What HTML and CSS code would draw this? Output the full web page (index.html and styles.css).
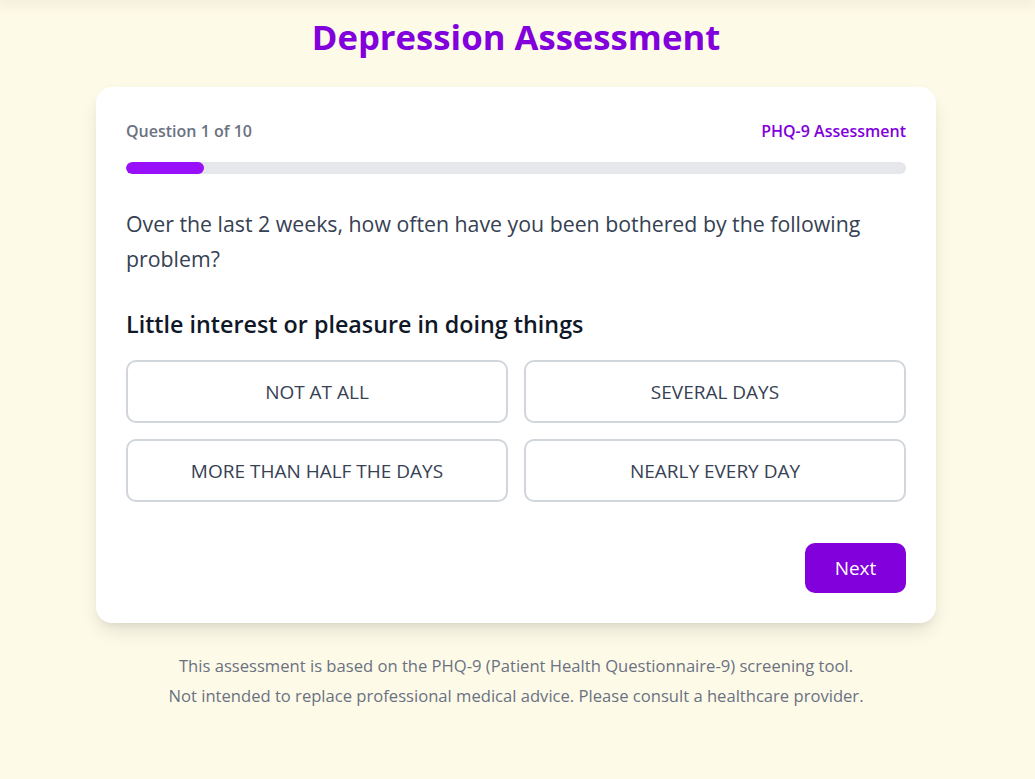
FILE: index.html
```html
<!DOCTYPE html>
<html lang="en">
<head>
<meta charset="utf-8">
<title>Depression Assessment</title>
<link rel="stylesheet" href="styles.css">
</head>
<body>
<div class="topshade"></div>
<main class="page">
  <h1 class="title">Depression Assessment</h1>
  <section class="card">
    <div class="meta">
      <span class="count">Question 1 of 10</span>
      <span class="tag">PHQ-9 Assessment</span>
    </div>
    <div class="track"><div class="fill" style="width:10%"></div></div>
    <p class="prompt">Over the last 2 weeks, how often have you been bothered by the following problem?</p>
    <h2 class="item">Little interest or pleasure in doing things</h2>
    <div class="options">
      <button class="opt">NOT AT ALL</button>
      <button class="opt">SEVERAL DAYS</button>
      <button class="opt">MORE THAN HALF THE DAYS</button>
      <button class="opt">NEARLY EVERY DAY</button>
    </div>
    <div class="actions">
      <button class="next">Next</button>
    </div>
  </section>
  <footer class="foot">
    <p>This assessment is based on the PHQ-9 (Patient Health Questionnaire-9) screening tool.</p>
    <p>Not intended to replace professional medical advice. Please consult a healthcare provider.</p>
  </footer>
</main>
</body>
</html>
```

FILE: styles.css
```css
* { box-sizing: border-box; }
html, body { margin: 0; padding: 0; }
body {
  background: #fefae8;
  font-family: "Open Sans", "Noto Sans", sans-serif;
  min-height: 779px;
  position: relative;
}
.topshade {
  position: absolute;
  top: 0; left: 0; right: 0;
  height: 0;
  box-shadow: 0 0 14px 3px rgba(120, 110, 60, 0.18);
}
.page {
  width: 843px;
  padding-right: 3px;
  margin: 0 auto;
  padding-top: 13px;
}
.title {
  margin: 0 0 26px;
  text-align: center;
  font-size: 34.7px;
  line-height: 48px;
  font-weight: 700;
  color: #8200db;
}
.card {
  background: #fff;
  border-radius: 16px;
  box-shadow: 0 10px 20px -4px rgba(0,0,0,0.12), 0 4px 8px -4px rgba(0,0,0,0.08);
  padding: 32px 30px 30px;
}
.meta {
  display: flex;
  justify-content: space-between;
  align-items: center;
  font-size: 16px;
  line-height: 24px;
  font-weight: 600;
}
.count { color: #6a7282; }
.tag { color: #8200db; }
.track {
  margin-top: 19px;
  height: 12px;
  border-radius: 999px;
  background: #e5e7eb;
  overflow: hidden;
}
.fill { height: 100%; background: #9810fa; border-radius: 999px; }
.prompt {
  margin: 32px 0 0;
  font-size: 21.3px;
  line-height: 35px;
  color: #364153;
}
.item {
  margin: 32px 0 0;
  font-size: 23.3px;
  line-height: 32px;
  font-weight: 600;
  color: #101828;
}
.options {
  margin-top: 20px;
  display: grid;
  grid-template-columns: 1fr 1fr;
  gap: 16px;
}
.opt {
  height: 63px;
  background: #fff;
  border: 2px solid #d1d5dc;
  border-radius: 10px;
  font-family: inherit;
  font-size: 19px;
  color: #364153;
  cursor: pointer;
}
.actions {
  margin-top: 41px;
  display: flex;
  justify-content: flex-end;
}
.next {
  width: 101px;
  height: 50px;
  border: none;
  border-radius: 10px;
  background: #8200db;
  color: #fff;
  font-family: inherit;
  font-size: 19px;
  cursor: pointer;
}
.foot {
  margin-top: 28px;
  text-align: center;
  color: #6a7282;
  font-size: 16.6px;
  line-height: 30px;
}
.foot p { margin: 0; }
```
